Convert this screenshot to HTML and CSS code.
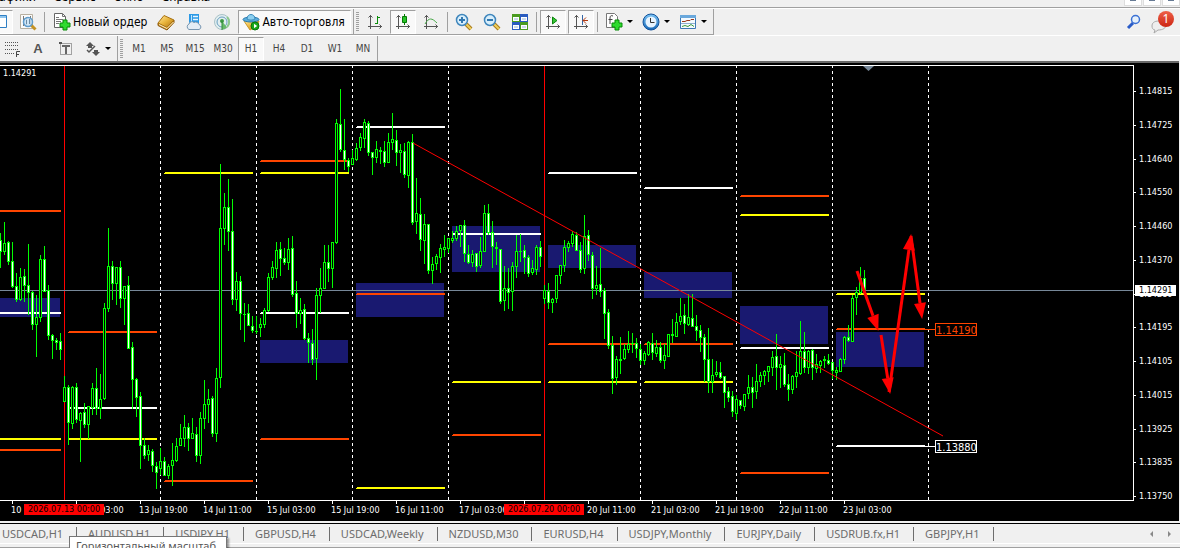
FILE: index.html
```html
<!DOCTYPE html>
<html lang="ru">
<head>
<meta charset="utf-8">
<title>Терминал</title>
<link rel="stylesheet" href="styles.css">
</head>
<body>
<svg class="defs" aria-hidden="true">
  <defs>
    <linearGradient id="gold" x1="0" y1="0" x2="1" y2="1"><stop offset="0" stop-color="#ffe9a0"/><stop offset=".5" stop-color="#e9b43a"/><stop offset="1" stop-color="#a86a0c"/></linearGradient>
    <linearGradient id="blue" x1="0" y1="0" x2="0" y2="1"><stop offset="0" stop-color="#7cc4f4"/><stop offset="1" stop-color="#1668b8"/></linearGradient>
    <symbol id="lens" viewBox="0 0 18 18"><path d="M11 11l5 5" stroke="#a87a1c" stroke-width="4"/><path d="M11 11l5 5" stroke="#f0cf5a" stroke-width="2"/><circle cx="7" cy="7" r="5.500" fill="#d8effc" stroke="#3f86bc" stroke-width="1.500"/></symbol>
    <symbol id="axes" viewBox="0 0 16 16"><path d="M3.500 1v14M1 12.500h14M1.500 3.500l2-2 2 2M12.500 10.500l2 2-2 2" fill="none" stroke="#555"/></symbol>
    <symbol id="plus" viewBox="0 0 12 12"><path d="M4 1h4v3h3v4H8v3H4V8H1V4h3z" fill="#2edb2e" stroke="#078a07"/></symbol>
  </defs>
</svg>

<nav class="menu">
  <button>Графики</button><button>Сервис</button><button>Окно</button><button>Справка</button>
  <span class="window-buttons"><i></i><i></i><i></i></span>
</nav>

<header class="bar">
  <div class="group standard">
    <button class="tool edge on" aria-label="Данные"><svg width="8" height="16"><path d="M0 1.500h6.500v12H0" fill="#fff" stroke="#2f7fc4"/><path d="M0 3h6" stroke="#8ec5ee" stroke-width="2"/></svg></button>
    <button class="tool" aria-label="Тестер"><svg width="18" height="18"><path d="M1.500 1.500h12v14h-12z" fill="#fafafa" stroke="#b8b0a0"/><path d="M4.500 3v10M7.500 4v8M11.500 3v10" stroke="#777"/><path d="M12 12l4.500 4.500" stroke="#c39224" stroke-width="3"/><circle cx="9" cy="9" r="4.500" fill="#c8e2f4" fill-opacity=".85" stroke="#5f9ccc" stroke-width="1.500"/><path d="M7.500 7v4M10.500 6v5" stroke="#6c8ba4"/></svg></button>
    <span class="sep"></span>
    <button class="tool wide"><svg width="18" height="18"><path d="M1.500.500h8l3 3v11h-11z" fill="#fff" stroke="#666"/><path d="M9.500.500v3h3M3 4.500h3M3 6.500h7M3 8.500h5M3 10.500h3" fill="none" stroke="#777"/><use href="#plus" x="6" y="6" width="12" height="12"/></svg>Новый ордер</button>
    <button class="tool" aria-label="Редактор"><svg width="18" height="18"><path d="M1 10v2.500l9 4.500 7-7.500V7l-7 7z" fill="#c4871a" stroke="#8a560a"/><path d="M1 10l6-7.500L17 7l-7 7.500z" fill="url(#gold)" stroke="#a8700f"/><path d="M2 11.500l8 4 6.500-6.500" fill="none" stroke="#fff2c8"/></svg></button>
    <button class="tool" aria-label="Облако"><svg width="18" height="18"><path d="M4 1h10v10H4z" fill="#2c9ae6"/><path d="M6.500 2v8" stroke="#bfe4ff"/><path d="M8 3.500h5M8 6.500h5" stroke="#e9f6ff" stroke-width="1.500"/><path d="M4 16.500a3 3 0 0 1 0-5.500 3 3 0 0 1 5-1.500 3.500 3.500 0 0 1 5 2 2.600 2.600 0 0 1 0 5z" fill="#e4edf5" stroke="#7896b0"/></svg></button>
    <button class="tool" aria-label="Сигналы"><svg width="18" height="18" fill="none"><circle cx="9" cy="9" r="7.500" fill="#e2eef0" stroke="#a9c2c8"/><circle cx="9" cy="9" r="5" stroke="#6a9fc0"/><path d="M9 8l5 6.500a8 8 0 0 1-5 2z" fill="#67b96a"/><path d="M14 4a7 7 0 0 1 0 10" stroke="#8cc88e" stroke-width="2"/><circle cx="9" cy="8" r="2" fill="#3e9a44"/><path d="M9 8v9" stroke="#2f8c38"/></svg></button>
    <button class="tool wide auto on"><svg width="18" height="18"><path d="M2 8l6 9 7-4 2-5z" fill="url(#gold)" stroke="#c89728"/><ellipse cx="9" cy="6.500" rx="8" ry="2.500" fill="#59aede" stroke="#2a78ac"/><path d="M5 6c0-6 8-6 8 0-2 1.500-6 1.500-8 0z" fill="#8cd0f0" stroke="#3b8abb"/><circle cx="13" cy="13" r="4" fill="#1aa81a" stroke="#0a760a"/><path d="M12 10.800v4.400l3.200-2.200z" fill="#fff"/></svg>Авто-торговля</button>
  </div>
  <div class="group charts">
    <span class="grip"></span>
    <button class="tool" aria-label="Бары"><svg width="16" height="16"><use href="#axes" width="16" height="16"/><path d="M10.500 2v8M10 3.500h3M8 9.500h2" stroke="#0a8c0a"/></svg></button>
    <button class="tool on" aria-label="Свечи"><svg width="16" height="16"><use href="#axes" width="16" height="16"/><path d="M9.500 0v11" stroke="#077a07"/><path d="M7.500 2.500h4v6h-4z" fill="#28c428" stroke="#077a07"/></svg></button>
    <button class="tool" aria-label="Линия"><svg width="16" height="16"><use href="#axes" width="16" height="16"/><path d="M2 10c4-7 7-6 12-1" fill="none" stroke="#48a848"/></svg></button>
    <span class="sep"></span>
    <button class="tool" aria-label="Увеличить"><svg width="18" height="18"><use href="#lens" width="18" height="18"/><path d="M7 4v6M4 7h6" stroke="#3278b0" stroke-width="2"/></svg></button>
    <button class="tool" aria-label="Уменьшить"><svg width="18" height="18"><use href="#lens" width="18" height="18"/><path d="M4 7h6" stroke="#3278b0" stroke-width="2"/></svg></button>
    <button class="tool" aria-label="Мозаика"><svg width="16" height="16"><path d="M0 0h8v8H0z" fill="#4a9c20"/><path d="M8 0h8v8H8z" fill="#2a5cc0"/><path d="M0 8h8v8H0z" fill="#2a5cc0"/><path d="M8 8h8v8H8z" fill="#4a9c20"/><path d="M1 3h6v4H1zM9 3h6v4H9zM1 11h6v4H1zM9 11h6v4H9z" fill="#fff"/><path d="M2 5h4M10 5h4M2 13h4M10 13h4" stroke="#9ab8d8"/></svg></button>
    <span class="sep"></span>
    <button class="tool on" aria-label="Автопрокрутка"><svg width="16" height="16"><use href="#axes" width="16" height="16"/><path d="M7.500 3v7l4.500-3.500z" fill="#35c435" stroke="#0b850b"/></svg></button>
    <button class="tool on" aria-label="Сдвиг"><svg width="16" height="16"><use href="#axes" width="16" height="16"/><path d="M9.500 1v10" stroke="#3465a4"/><path d="M10 6.500h5M13 3.500l-3 3 3 3" fill="none" stroke="#b23a12"/></svg></button>
    <span class="sep"></span>
    <button class="tool drop" aria-label="Индикаторы"><svg width="18" height="18"><path d="M1.500.500h8l3 3v11h-11z" fill="#fff" stroke="#777"/><path d="M8 3c-2-1-3 0-3 2v6M3.500 6.500h4" fill="none" stroke="#444"/><use href="#plus" x="6" y="6" width="12" height="12"/></svg><i class="caret"></i></button>
    <button class="tool drop" aria-label="Периоды"><svg width="18" height="18"><circle cx="9" cy="9" r="8" fill="url(#blue)" stroke="#14529a"/><circle cx="9" cy="9" r="5.500" fill="#e8f4ff"/><path d="M8.500 5v4.500h4" fill="none" stroke="#333"/></svg><i class="caret"></i></button>
    <button class="tool drop" aria-label="Шаблоны"><svg width="18" height="16"><path d="M1.500 1.500h15v13h-15z" fill="#f4faff" stroke="#3c78b4"/><path d="M1 2.500h16" stroke="#6aa8dc" stroke-width="3"/><path d="M3 7.500h3l2-1h3l1-1h3" fill="none" stroke="#9a3a1c"/><path d="M2 9.500h14" stroke="#8fb0d0"/><path d="M3 12.500l3-1 3 1 3-2 3 2" fill="none" stroke="#3a9a3a"/></svg><i class="caret"></i></button>
  </div>
  <div class="right">
    <button class="tool" aria-label="Поиск"><svg width="16" height="16"><path d="M2 14l5-5" stroke="#2a5cc8" stroke-width="3"/><circle cx="9.500" cy="5.500" r="4" fill="#e6f0fa" stroke="#3a70d4" stroke-width="1.500"/></svg></button>
    <button class="tool mail" aria-label="Сообщения"><svg width="24" height="24"><path d="M8 11c-5 0-7 2-7 5 0 2 1 4 3 4l-1 3 4-3c5 0 8-2 8-5z" fill="#eee" stroke="#aaa"/></svg><span class="badge">1</span></button>
  </div>
</header>

<div class="bar second">
  <div class="group drawing">
    <button class="tool" aria-label="Фибоначчи"><svg width="18" height="18"><path d="M2 2.500h13M2 5.500h13M2 9.500h13M2 13.500h9" stroke="#555" stroke-dasharray="1 1"/><path d="M13.500 17v-5.500H17M13 14.500h3" fill="none" stroke="#444"/></svg></button>
    <button class="tool letter">A</button>
    <button class="tool" aria-label="Метка"><svg width="16" height="16"><path d="M2.500 2.500h11v11h-11z" fill="none" stroke="#555" stroke-dasharray="1 1"/><path d="M4 5h8M8 5v8" stroke="#666" stroke-width="2"/><path d="M1 1h3v2H1z" fill="#555"/></svg></button>
    <button class="tool drop" aria-label="Стрелки"><svg width="16" height="16"><path d="M1 5l4-4 4 4H7v2H3V5zM7 11h2V9h4v2h2l-4 4z" fill="#555"/><path d="M2 9l2 2 6-6" fill="none" stroke="#555" stroke-width="1.500"/></svg><i class="caret"></i></button>
  </div>
  <div class="group frames">
    <span class="grip"></span>
    <button class="tool">M1</button><button class="tool">M5</button><button class="tool">M15</button><button class="tool">M30</button><button class="tool on">H1</button><button class="tool">H4</button><button class="tool">D1</button><button class="tool">W1</button><button class="tool">MN</button>
  </div>
</div>

<main class="chart">
  <div class="body">
    <div class="plot"><svg id="plot" width="1133" height="434" viewBox="0 66 1133 434" role="img" aria-label="График H1"></svg></div>
    <ol class="times">
      <li>10</li><li>13 Jul 03:00</li><li>13 Jul 19:00</li><li>14 Jul 11:00</li><li>15 Jul 03:00</li><li>15 Jul 19:00</li><li>16 Jul 11:00</li><li>17 Jul 03:00</li><li></li><li>20 Jul 11:00</li><li>21 Jul 03:00</li><li>21 Jul 19:00</li><li>22 Jul 11:00</li><li>23 Jul 03:00</li>
    </ol>
    <span class="flag first">2026.07.13 00:00</span>
    <span class="flag next">2026.07.20 00:00</span>
    <span class="quote">1.14291</span>
  </div>
  <div class="scale">
    <ol class="prices">
      <li>1.14815</li><li>1.14725</li><li>1.14640</li><li>1.14550</li><li>1.14460</li><li>1.14370</li><li>1.14280</li><li>1.14195</li><li>1.14105</li><li>1.14015</li><li>1.13925</li><li>1.13835</li><li>1.13750</li>
    </ol>
    <span class="now">1.14291</span>
  </div>
</main>

<footer class="tabs">
  <button>USDCAD,H1</button><button>AUDUSD,H1</button><button>USDJPY,H1</button><button>GBPUSD,H4</button><button>USDCAD,Weekly</button><button>NZDUSD,M30</button><button>EURUSD,H4</button><button>USDJPY,Monthly</button><button>EURJPY,Daily</button><button>USDRUB.fx,H1</button><button>GBPJPY,H1</button>
  <span class="scroll"><svg width="24" height="8"><path d="M5 1v6L2 4zM20 1v6l3-3z" fill="#888"/></svg></span>
</footer>
<div class="status"></div>
<div class="tip" role="tooltip">Горизонтальный масштаб</div>
<script src="chart.js"></script>
</body>
</html>
```

FILE: styles.css
```css
* { box-sizing: border-box; }
html { height: 100%; overflow: hidden; }
body {
  margin: 0;
  min-height: 100%;
  position: relative;
  display: flex;
  flex-direction: column;
  overflow: hidden;
  background: #f0f0f0;
  color: #000;
  font: 11px/16px "Noto Sans", sans-serif;
}
button { border: 0; padding: 0; background: none; color: inherit; font: inherit; white-space: nowrap; }
svg { display: block; flex: none; }
ol { list-style: none; margin: 0; padding: 0; }
.defs { position: absolute; width: 0; height: 0; }

.menu {
  height: 8px;
  display: flex;
  align-items: flex-end;
  gap: 18px;
  overflow: hidden;
  border-bottom: 1px solid #a0a0a0;
  font-size: 12px;
}
.menu button { height: 17px; line-height: 14px; padding-bottom: 3px; }
.menu button:first-child { margin-left: -14px; }
.window-buttons { margin-left: auto; align-self: flex-start; display: flex; gap: 1px; }
.window-buttons i { width: 18px; height: 6px; background: #fff; border: 1px solid #ddd; border-top: 0; }
.window-buttons i::before { content: ""; display: block; width: 6px; height: 1px; margin: 0 auto; background: #667a94; }

.bar { display: flex; height: 27px; border-top: 1px solid #fff; }
.group {
  display: flex;
  align-items: center;
  padding: 1px 0;
  border-right: 1px solid #a0a0a0;
  border-bottom: 1px solid #a0a0a0;
}
.standard { width: 354px; }
.tool { width: 28px; height: 24px; display: flex; align-items: center; justify-content: center; flex: none; }
.on { width: 26px; margin: 0 1px; background: #f9f9f9; border: 1px solid #fff; border-top-color: #a0a0a0; border-left-color: #a0a0a0; }
.edge { width: 13px; margin: 0 1px 0 0; justify-content: flex-start; border-left: 0; }
.wide { width: auto; gap: 2px; padding: 0 5px 0 3px; font: 12px/16px "DejaVu Sans Condensed", sans-serif; }
.auto { margin-left: 2px; }
.sep { width: 1px; height: 20px; margin: 0 2px; background: #a0a0a0; }
.standard .sep { margin-right: 5px; }
.grip { width: 3px; height: 20px; margin: 0 2px; background: repeating-linear-gradient(#a0a0a0 0 1px, #f0f0f0 1px 2px); }
.charts { padding-right: 2px; }
.drop { width: 36px; gap: 4px; }
.charts .drop { width: 37px; }
.caret { border: 3px solid transparent; border-top-color: #000; border-bottom: 0; }
.right { margin-left: auto; display: flex; align-items: center; padding-right: 2px; }
.mail { position: relative; width: 30px; }
.badge {
  position: absolute;
  top: 1px;
  right: 4px;
  width: 16px;
  height: 16px;
  border-radius: 50%;
  background: linear-gradient(#ee6048, #cc2412);
  color: #fff;
  font-size: 12px;
}
.second { height: 26px; }
.second .group { border-bottom: 0; }
.drawing { width: 118px; }
.drawing .tool { color: #555; }
.drawing .tool:first-child { width: 24px; }
.letter { font: bold 13px "Liberation Sans", sans-serif; }
.frames { color: #444; }
.frames .tool { font: 10px "DejaVu Sans Condensed", sans-serif; }

.chart {
  display: flex;
  margin-right: 1px;
  padding-top: 2px;
  background: #000;
  border-top: 2px solid #696969;
  color: #fff;
  font: 9px/11px "DejaVu Sans Condensed", sans-serif;
}
.body { position: relative; flex: 1; min-width: 0; overflow: hidden; }
.plot { border: 1px solid #fff; border-left: 0; overflow: hidden; }
.times { display: flex; height: 20px; padding-left: 11px; overflow: hidden; }
.times li { flex: none; width: 64px; white-space: nowrap; }
.times li::before { content: ""; display: block; width: 1px; height: 3px; margin: 0 0 1px 1px; background: #fff; }
.flag { position: absolute; bottom: 6px; width: 80px; height: 11px; background: #f00; color: #000; text-align: center; white-space: nowrap; }
.first { left: 24px; }
.next { left: 504px; }
.quote { position: absolute; top: 3px; left: 3px; }
.scale { position: relative; width: 45px; }
.prices { height: 100%; padding: 21px 0 19px; display: flex; flex-direction: column; justify-content: space-between; }
.prices li { display: flex; align-items: center; gap: 3px; }
.prices li::before { content: ""; width: 2px; height: 1px; background: #fff; }
.now { position: absolute; top: 220px; left: 1px; width: 41px; padding-left: 4px; background: #fff; color: #000; }

.rect { fill: #191970; }
.price-line { fill: #778899; }
.day { stroke: #fff; stroke-dasharray: 3 3; }
.week { stroke: #f00; }
.w { fill: #fff; }
.o { fill: #ff4500; }
.y { fill: #ff0; }
.wick, .candle { fill: #0f0; }
.up { fill: #000; }
.down { fill: #fff; }
.trend { stroke: #f00; }
.arrow { stroke: #f00; stroke-width: 3; }
.head { fill: #f00; }
.marker { fill: #778899; }
.tag { fill: #000; stroke: #fff; }
.tag.hot { stroke: #ff4500; }
.tag-text { fill: #fff; font: 11px "DejaVu Sans Condensed", sans-serif; }
.tag-text.hot { fill: #ff4500; }

.tabs {
  display: flex;
  align-items: center;
  height: 21px;
  margin-top: 2px;
  border-top: 1px solid #000;
  border-bottom: 1px solid #fff;
  color: #6d6d6d;
}
.tabs button { flex: none; height: 16px; display: flex; align-items: center; padding-left: 11px; }
.tabs button:first-child { padding-left: 2px; }
.tabs button::after { content: ""; width: 1px; height: 14px; margin-left: 13px; background: #6d6d6d; }
.scroll { margin-left: auto; padding-right: 8px; }
.status { flex: 1; min-height: 3px; border-bottom: 1px solid #a0a0a0; }
.tip {
  position: absolute;
  left: 69px;
  top: 536px;
  padding: 0 10px 0 6px;
  border: 1px solid #767676;
  background: #fff;
  color: #575757;
  line-height: 18px;
  white-space: nowrap;
  box-shadow: 2px 2px 2px #0006;
}
```

FILE: chart.js
```js
const plot = document.getElementById('plot');
const add = (tag, cls, attrs, text) => {
  const el = document.createElementNS('http://www.w3.org/2000/svg', tag);
  el.setAttribute('class', cls);
  for (const key in attrs) el.setAttribute(key, attrs[key]);
  if (text) el.textContent = text;
  plot.append(el);
};
const box = (cls, x, y, width, height) => add('rect', cls, { x, y, width, height, 'shape-rendering': 'crispEdges' });
const line = (cls, x1, y1, x2, y2) => add('line', cls, { x1, y1, x2, y2 });

// left, top, right, bottom of each zone
[[0,298,60,317],[260,340,348,363],[356,283,444,317],[452,226,540,272],[548,245,636,268],[644,272,732,298],[740,306,828,344],[836,332,924,367]]
  .forEach(([l, t, r, b]) => box('rect', l, t, r - l, b - t));

for (let x = 64; x <= 928; x += 96) {
  line(x === 64 || x === 544 ? 'week' : 'day', x + .5, 65, x + .5, 500);
}

box('price-line', 0, 290, 1133, 1);

// day start, then colour and top of each level
[[-27,'o',210,'w',312,'y',438,'o',449],[69,'o',331,'w',407,'y',438],[165,'y',172,'o',480],
 [261,'o',160,'y',172,'w',312,'o',438],[357,'w',126,'o',293,'y',487],[453,'w',233,'y',381,'o',434],
 [549,'w',172,'o',343,'y',381],[645,'w',187,'o',343,'y',381],[741,'o',195,'y',214,'w',347,'o',472],
 [837,'y',293,'o',328,'w',445]]
  .forEach(([x, ...levels]) => {
    for (let i = 0; i < levels.length; i += 2) {
      box(levels[i], x, levels[i + 1], 88, 2);
      box(levels[i], x - 1, levels[i + 1] + 1, 1, 1);
    }
  });

// high, body top, body bottom, low; "w" marks a falling bar
const bars = `233,240,252,268w 222,243,252,255 241,242,262,265w 242,261,287,288w 273,286,300,302w
268,277,300,301 269,276,286,302w 244,285,293,315w 291,292,325,330w 295,317,325,357 255,259,318,322
246,259,292,292w 285,290,336,340w 334,335,341,359w 338,340,343,350w 333,341,350,360w 376,387,402,402
385,387,423,445w 386,387,424,429 383,387,420,423w 412,413,421,462 403,412,425,428w 406,406,425,439
383,388,408,415 368,388,409,415w 374,399,409,419 303,308,399,400 228,266,309,312 261,266,284,300w
267,267,284,305 261,267,299,308w 286,286,299,325 276,285,349,349w 342,347,380,409w 378,379,398,417w
392,396,446,469w 438,445,456,459w 445,450,455,461 449,451,466,472w 462,466,473,489w 448,461,469,475
457,461,476,476w 464,466,476,479 443,460,466,486 438,446,461,462 424,438,446,446 415,427,439,447
423,427,439,451w 418,433,439,439 427,434,456,462w 412,418,456,464 380,404,419,429 389,399,405,423
396,398,434,437w 368,378,434,442 164,228,378,388 193,207,229,245 179,207,232,251w 199,231,300,305w
272,281,300,311 276,281,314,330w 303,314,315,342 304,313,326,326w 316,326,331,333w 316,331,332,334
318,324,328,337 308,310,325,328 273,277,311,312 261,267,278,280 242,250,269,278 242,249,259,276w
248,258,263,265w 238,249,263,270 236,248,295,297w 281,293,314,328w 298,310,314,324 304,309,339,340w
333,338,343,363w 329,343,360,365w 288,295,359,380 268,288,296,313 245,262,289,289 245,262,269,282w
242,242,269,288 119,123,243,244 89,124,150,152w 119,150,160,170w 158,160,167,172w 150,158,165,165
143,148,160,161 133,137,148,151 119,122,139,148 121,123,153,156w 152,152,158,175w 141,149,158,163
147,150,152,164 141,151,163,167w 133,142,163,163 113,139,143,150 130,140,153,166w 144,150,153,173
143,151,175,178w 141,142,176,188 134,142,223,225w 178,213,222,234 198,214,240,251w 214,224,241,264
224,224,271,274w 257,264,271,284 254,256,264,270 244,248,258,273 235,247,250,257 238,238,249,253
231,238,241,243 226,231,239,241 225,225,231,247 220,225,254,262w 245,254,263,264w 250,254,263,267
253,253,267,272w 237,251,266,268 205,213,252,252 204,213,233,235w 221,232,247,268w 242,247,249,265
249,249,302,304w 266,288,301,311 268,288,293,309w 262,266,292,311 235,251,267,278 234,251,252,262
245,250,258,274w 255,257,274,277w 260,268,273,275 245,247,270,275 241,247,257,267w 285,290,299,304
283,291,303,309w 298,299,303,313 275,275,299,303 265,265,276,284 240,247,266,272 241,243,248,252
231,234,244,247 232,235,251,251w 242,250,270,273w 215,236,269,274 230,235,255,261w 252,255,289,299w
266,285,289,295 248,284,292,297w 288,290,314,339w 309,312,346,349w 336,345,379,394w 356,359,378,385
337,359,361,374 344,349,359,360 331,344,350,353 333,343,344,353 338,343,349,358w 344,349,361,365w
351,353,361,365 341,342,355,356 333,343,353,360w 340,347,354,357 342,347,361,363w 344,355,361,369
334,334,357,357 319,334,336,343 313,322,337,337 298,316,322,325 304,315,324,334w 294,317,325,326
294,318,327,327w 315,326,331,341w 325,330,338,352w 334,337,360,382w 328,359,382,393w 359,375,382,393
361,372,375,377 362,372,378,379w 376,376,393,408w 387,391,398,402w 391,396,412,417w 395,399,414,420
400,400,406,409w 394,394,407,411 375,387,394,399 377,387,393,408w 364,381,392,399 372,375,382,387
370,371,376,385 366,366,372,382 351,357,368,376 334,356,368,390w 356,364,368,388 353,365,385,387w
374,384,390,401w 375,376,390,394 351,372,377,388 321,351,374,375 332,351,368,373w 350,351,368,374
349,350,368,380w 354,364,369,373 360,361,366,373 356,359,361,368 354,360,364,365w 362,362,371,379w
367,370,373,380 358,359,372,372 336,337,360,364 325,337,341,342w 295,298,342,342 287,292,298,315
267,278,293,294 270,278,290,293w`.split(/\s+/);

bars.forEach((bar, i) => {
  const x = i * 4;
  const [high, top, bottom, low] = bar.replace('w', '').split(',').map(Number);
  box('wick', x, high, 1, low - high);
  box('candle', x - 1, top, 3, bottom - top);
  if (bottom - top > 2) box(bar.endsWith('w') ? 'down' : 'up', x, top + 1, 1, bottom - top - 2);
});

line('trend', 413, 143, 943, 436);

[[857,271,878,330],[881,335,890,393],[889,392,911,235],[911,236,922,318]].forEach(([x1, y1, x2, y2]) => {
  const len = Math.hypot(x2 - x1, y2 - y1);
  const dx = (x2 - x1) / len, dy = (y2 - y1) / len;
  const bx = x2 - dx * 15, by = y2 - dy * 15;
  line('arrow', x1, y1, bx, by);
  add('polygon', 'head', { points: `${x2 + dx},${y2 + dy} ${bx - dy * 6},${by + dx * 6} ${bx + dy * 6},${by - dx * 6}` });
});

add('polygon', 'marker', { points: '863,66 874,66 868.500,71' });

box('o', 925, 329, 10, 1);
box('w', 925, 446, 10, 1);
add('rect', 'tag hot', { x: 935.5, y: 323.5, width: 41, height: 12 });
add('text', 'tag-text hot', { x: 936, y: 334 }, '1.14190');
add('rect', 'tag', { x: 935.5, y: 440.5, width: 41, height: 12 });
add('text', 'tag-text', { x: 936, y: 451 }, '1.13880');
```
